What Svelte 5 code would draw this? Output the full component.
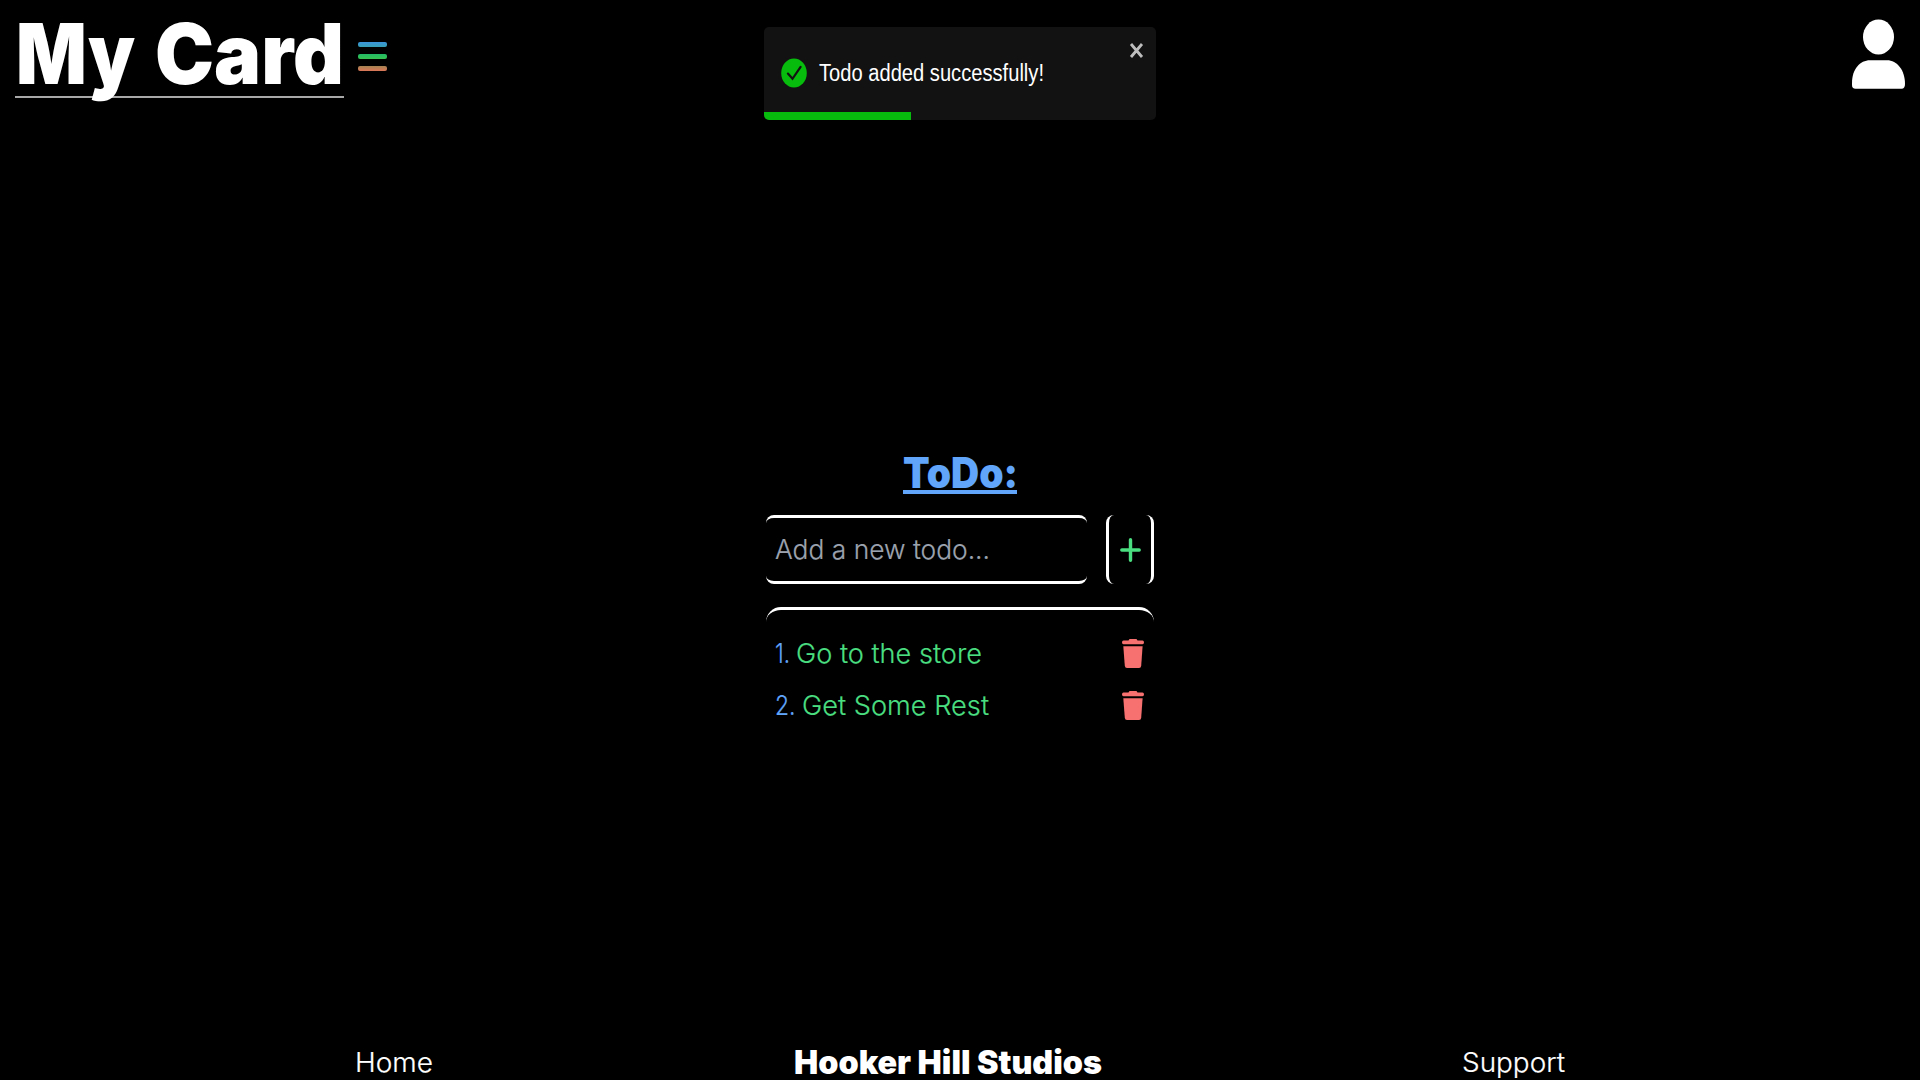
<script>
  const title = [
    { text: 'My', x: 1, width: 119 },
    { text: 'Card', x: 140, width: 189 }
  ];
  const todos = [
    { n: '1.', nWidth: 15, text: 'Go to the store', width: 186, gap: 5.5 },
    { n: '2.', nWidth: 20.5, text: 'Get Some Rest', width: 187, gap: 6 }
  ];
</script>

<!-- Words scaled to fixed advance widths, sitting on the given baseline -->
{#snippet words(parts, width, height, baseline, kind)}
  <svg class="label {kind}" {width} {height}>
    {#each parts as p}
      <text x={p.x} y={baseline} textLength={p.width} lengthAdjust="spacingAndGlyphs">{p.text}</text>
    {/each}
  </svg>
{/snippet}

{#snippet label(text, width, height, baseline, kind)}
  {@render words([{ text, x: 0, width }], width, height, baseline, kind)}
{/snippet}

<div class="page">
  <header>
    <div class="brand">
      <h1>{@render words(title, 329, 82, 69, 'title')}</h1>
      <button class="menu" aria-label="Menu">
        <span class="blue"></span>
        <span class="green"></span>
        <span class="orange"></span>
      </button>
    </div>
    <svg class="avatar" width="54" height="71" viewBox="0 0 54 71">
      <ellipse cx="26.5" cy="18" rx="15.5" ry="17.5" />
      <path d="M0 64C0 50 8 41.2 18 41.2H35C45 41.2 53 51 53 65Q53 69.800 49.500 69.800H3.500Q0 69.800 0 66Z" />
    </svg>
  </header>

  <div class="toast" role="alert">
    <svg class="check" width="26" height="30" viewBox="0 0 26 30">
      <ellipse cx="13" cy="15" rx="12.8" ry="14.6" />
      <path d="M6.900 15.600L11.500 20.800L19.600 8.900" />
    </svg>
    {@render label('Todo added successfully!', 225, 30, 23.3, 'message')}
    <svg class="close" width="13" height="15" viewBox="0 0 13 15">
      <path d="M1 1L12 14M12 1L1 14" />
    </svg>
    <div class="progress"></div>
  </div>

  <main>
    <h2>{@render label('ToDo:', 115, 37, 33.5, 'heading')}</h2>
    <div class="entry">
      <div class="field">{@render label('Add a new todo...', 215, 34, 27, 'light muted')}</div>
      <button class="add" aria-label="Add">
        <svg width="21" height="24" viewBox="0 0 21 24">
          <path d="M10.500 1.800V22.200M1.800 12H19.200" />
        </svg>
      </button>
    </div>
    <ul>
      {#each todos as t}
        <li>
          <div class="item">
            {@render label(t.n, t.nWidth, 34, 27, 'light number')}
            <svg class="spacer" width={t.gap} height="1"></svg>
            {@render label(t.text, t.width, 34, 27, 'light task')}
          </div>
          <svg class="trash" width="22" height="29" viewBox="0 0 22 29">
            <path d="M6.500 1.600L7.500 0H14.500L15.500 1.600H20.500Q22 1.600 22 3.500Q22 5.300 20.500 5.300H1.500Q0 5.300 0 3.500Q0 1.600 1.500 1.600Z" />
            <path d="M1.300 7.300H20.600L19.200 26.800Q19 29 17 29H5Q3 29 2.800 26.800Z" />
          </svg>
        </li>
      {/each}
    </ul>
  </main>

  <footer>
    <div class="home">{@render label('Home', 78, 36, 28, 'light')}</div>
    <div class="studio">{@render label('Hooker Hill Studios', 308, 36, 30, 'strong')}</div>
    <div class="support">{@render label('Support', 103, 36, 28, 'light')}</div>
  </footer>
</div>

<style>
  :global(body) {
    margin: 0;
    background: #000;
    overflow: hidden;
  }
  .page {
    box-sizing: border-box;
    height: 1080px;
    display: flex;
    flex-direction: column;
    position: relative;
    background: #000;
    color: #fff;
    font-family: Inter, 'Liberation Sans', sans-serif;
  }
  svg {
    display: block;
    flex: none;
    overflow: visible;
    fill: currentColor;
  }
  h1, h2, ul {
    margin: 0;
    padding: 0;
  }
  button {
    border: 0;
    padding: 0;
    background: none;
  }
  header {
    height: 105px;
    display: flex;
    justify-content: space-between;
    padding: 0 14px 0 15px;
    box-sizing: border-box;
  }
  .brand {
    display: flex;
    align-items: flex-start;
    gap: 14px;
  }
  h1 {
    margin-top: 15px;
    height: 81px;
    border-bottom: 2px solid #a8a8a8;
  }
  .title {
    font-size: 84px;
    font-weight: 900;
  }
  .menu {
    margin-top: 42px;
    display: flex;
    flex-direction: column;
    gap: 7px;
  }
  .menu span {
    width: 29px;
    height: 5px;
    border-radius: 2px;
  }
  .blue { background: linear-gradient(#3b93db, #36a0b4); }
  .green { background: linear-gradient(#22b866, #37c452); }
  .orange { background: linear-gradient(#a48452, #dc7758); }
  .avatar { margin-top: 18.500px; }

  .toast {
    position: absolute;
    left: 764px;
    top: 27px;
    width: 392px;
    height: 92.500px;
    box-sizing: border-box;
    padding: 0 13px 0 17px;
    display: flex;
    align-items: center;
    gap: 12px;
    border-radius: 5px;
    background: #121212;
    overflow: hidden;
  }
  .check ellipse { fill: #07bc0c; }
  .check path {
    fill: none;
    stroke: #121212;
    stroke-width: 2.200;
    stroke-linecap: round;
  }
  .message {
    font-family: 'Liberation Sans', Arial, sans-serif;
    font-size: 23.500px;
  }
  .close {
    align-self: flex-start;
    margin: 16px 0 0 auto;
  }
  .close path {
    fill: none;
    stroke: #bdbdbd;
    stroke-width: 2.800;
  }
  .progress {
    position: absolute;
    left: 0;
    bottom: 0;
    width: 147px;
    height: 7.500px;
    background: #07bc0c;
  }

  main {
    width: 388px;
    margin: 349px 0 0 766px;
  }
  h2 {
    width: 114px;
    height: 35.500px;
    margin: 0 auto;
    color: #60a5fa;
    border-bottom: 4px solid #60a5fa;
  }
  .heading {
    font-size: 42px;
    font-weight: 900;
  }
  .entry {
    margin-top: 21.500px;
    display: flex;
    justify-content: space-between;
    height: 69px;
  }
  .field {
    box-sizing: border-box;
    width: 321px;
    border: 0 solid #fff;
    border-width: 3px 0;
    border-radius: 8px;
    padding: 14px 0 0 9px;
  }
  .add {
    box-sizing: border-box;
    width: 48px;
    border: 0 solid #fff;
    border-width: 0 3px;
    border-radius: 8px;
    display: flex;
    align-items: center;
    justify-content: center;
    color: #4ade80;
  }
  .add svg { margin-left: 1px; }
  .add path {
    fill: none;
    stroke: currentColor;
    stroke-width: 3.400;
    stroke-linecap: round;
  }
  .light {
    font-size: 27.500px;
    font-weight: 300;
  }
  .light text {
    stroke: currentColor;
    stroke-width: 0.200px;
  }
  .muted { color: #9ca3af; }
  .number { color: #60a5fa; }
  .task { color: #4ade80; }
  ul {
    margin-top: 23px;
    border-top: 3px solid #fff;
    border-radius: 15px;
    padding: 20px 10px 15px 9px;
    list-style: none;
  }
  li {
    height: 52px;
    display: flex;
    justify-content: space-between;
    align-items: flex-start;
  }
  .item {
    display: flex;
    margin-top: 6px;
  }
  .trash {
    margin-top: 9px;
    color: #f87171;
  }

  footer {
    margin-top: auto;
    height: 36px;
    display: flex;
    justify-content: space-between;
    padding: 0 355px;
  }
  .strong {
    font-size: 33px;
    font-weight: 900;
  }
</style>
